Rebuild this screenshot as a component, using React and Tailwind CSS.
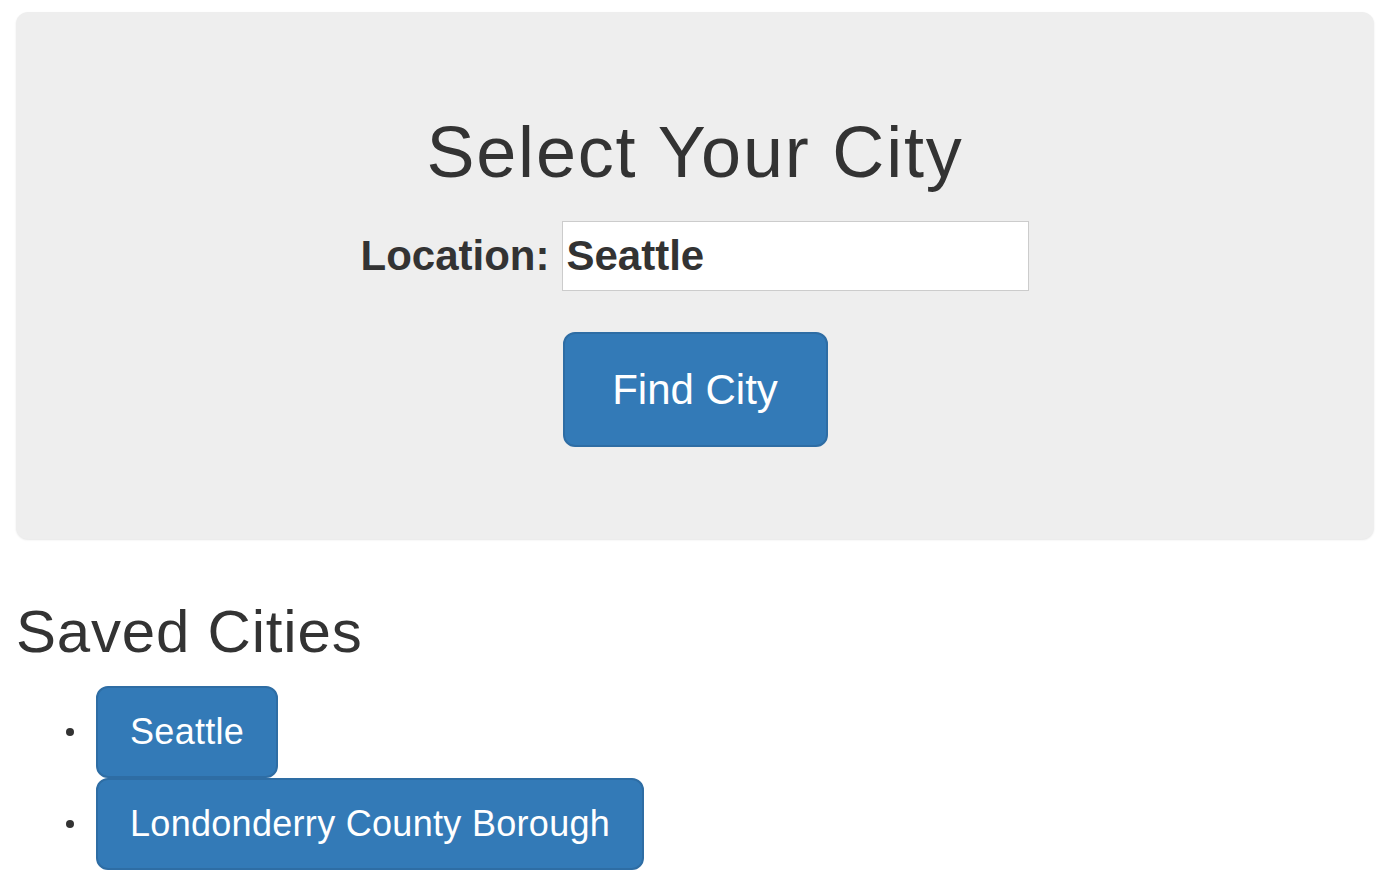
export default function App() {
  const saved = ['Seattle', 'Londonderry County Borough'];

  return (
    <div className="min-h-[880px] bg-white text-[#333] font-['Liberation_Sans',Arial,sans-serif]">
      {/* Search panel */}
      <div className="ml-[16px] mr-[18px] pt-[12px]">
        <div className="bg-[#eee] rounded-[12px] shadow-[0_1px_2px_rgba(0,0,0,0.1)] pt-[101px] pb-[92px] flex flex-col items-center">
          <h1 className="text-[72px] leading-[79px] font-normal tracking-[1.8px]">Select Your City</h1>
          <div className="mt-[29px] flex items-center gap-[13px]">
            <label className="text-[42px] font-bold leading-[48px]">Location:</label>
            <input
              type="text"
              defaultValue="Seattle"
              className="w-[467px] h-[70px] bg-white border border-[#ccc] pl-[3px] text-[42px] font-bold text-[#333] outline-none"
            />
          </div>
          <button className="mt-[41px] w-[265px] h-[115px] bg-[#337ab7] border-2 border-[#2e6da4] rounded-[12px] text-white text-[42px] leading-[56px]">
            Find City
          </button>
        </div>
      </div>

      {/* Saved list */}
      <div className="px-[16px]">
        <h2 className="mt-[60px] text-[60px] leading-[66px] font-normal tracking-[0.8px]">Saved Cities</h2>
        <ul className="mt-[21px]">
          {saved.map((city) => (
            <li key={city} className="flex items-center">
              <span className="ml-[50px] w-[8px] h-[8px] rounded-full bg-[#333]"></span>
              <button className="ml-[22px] h-[92px] px-[32px] bg-[#337ab7] border-2 border-[#2e6da4] rounded-[12px] text-white text-[36px] leading-[48px] tracking-[0.3px]">
                {city}
              </button>
            </li>
          ))}
        </ul>
      </div>
    </div>
  );
}
